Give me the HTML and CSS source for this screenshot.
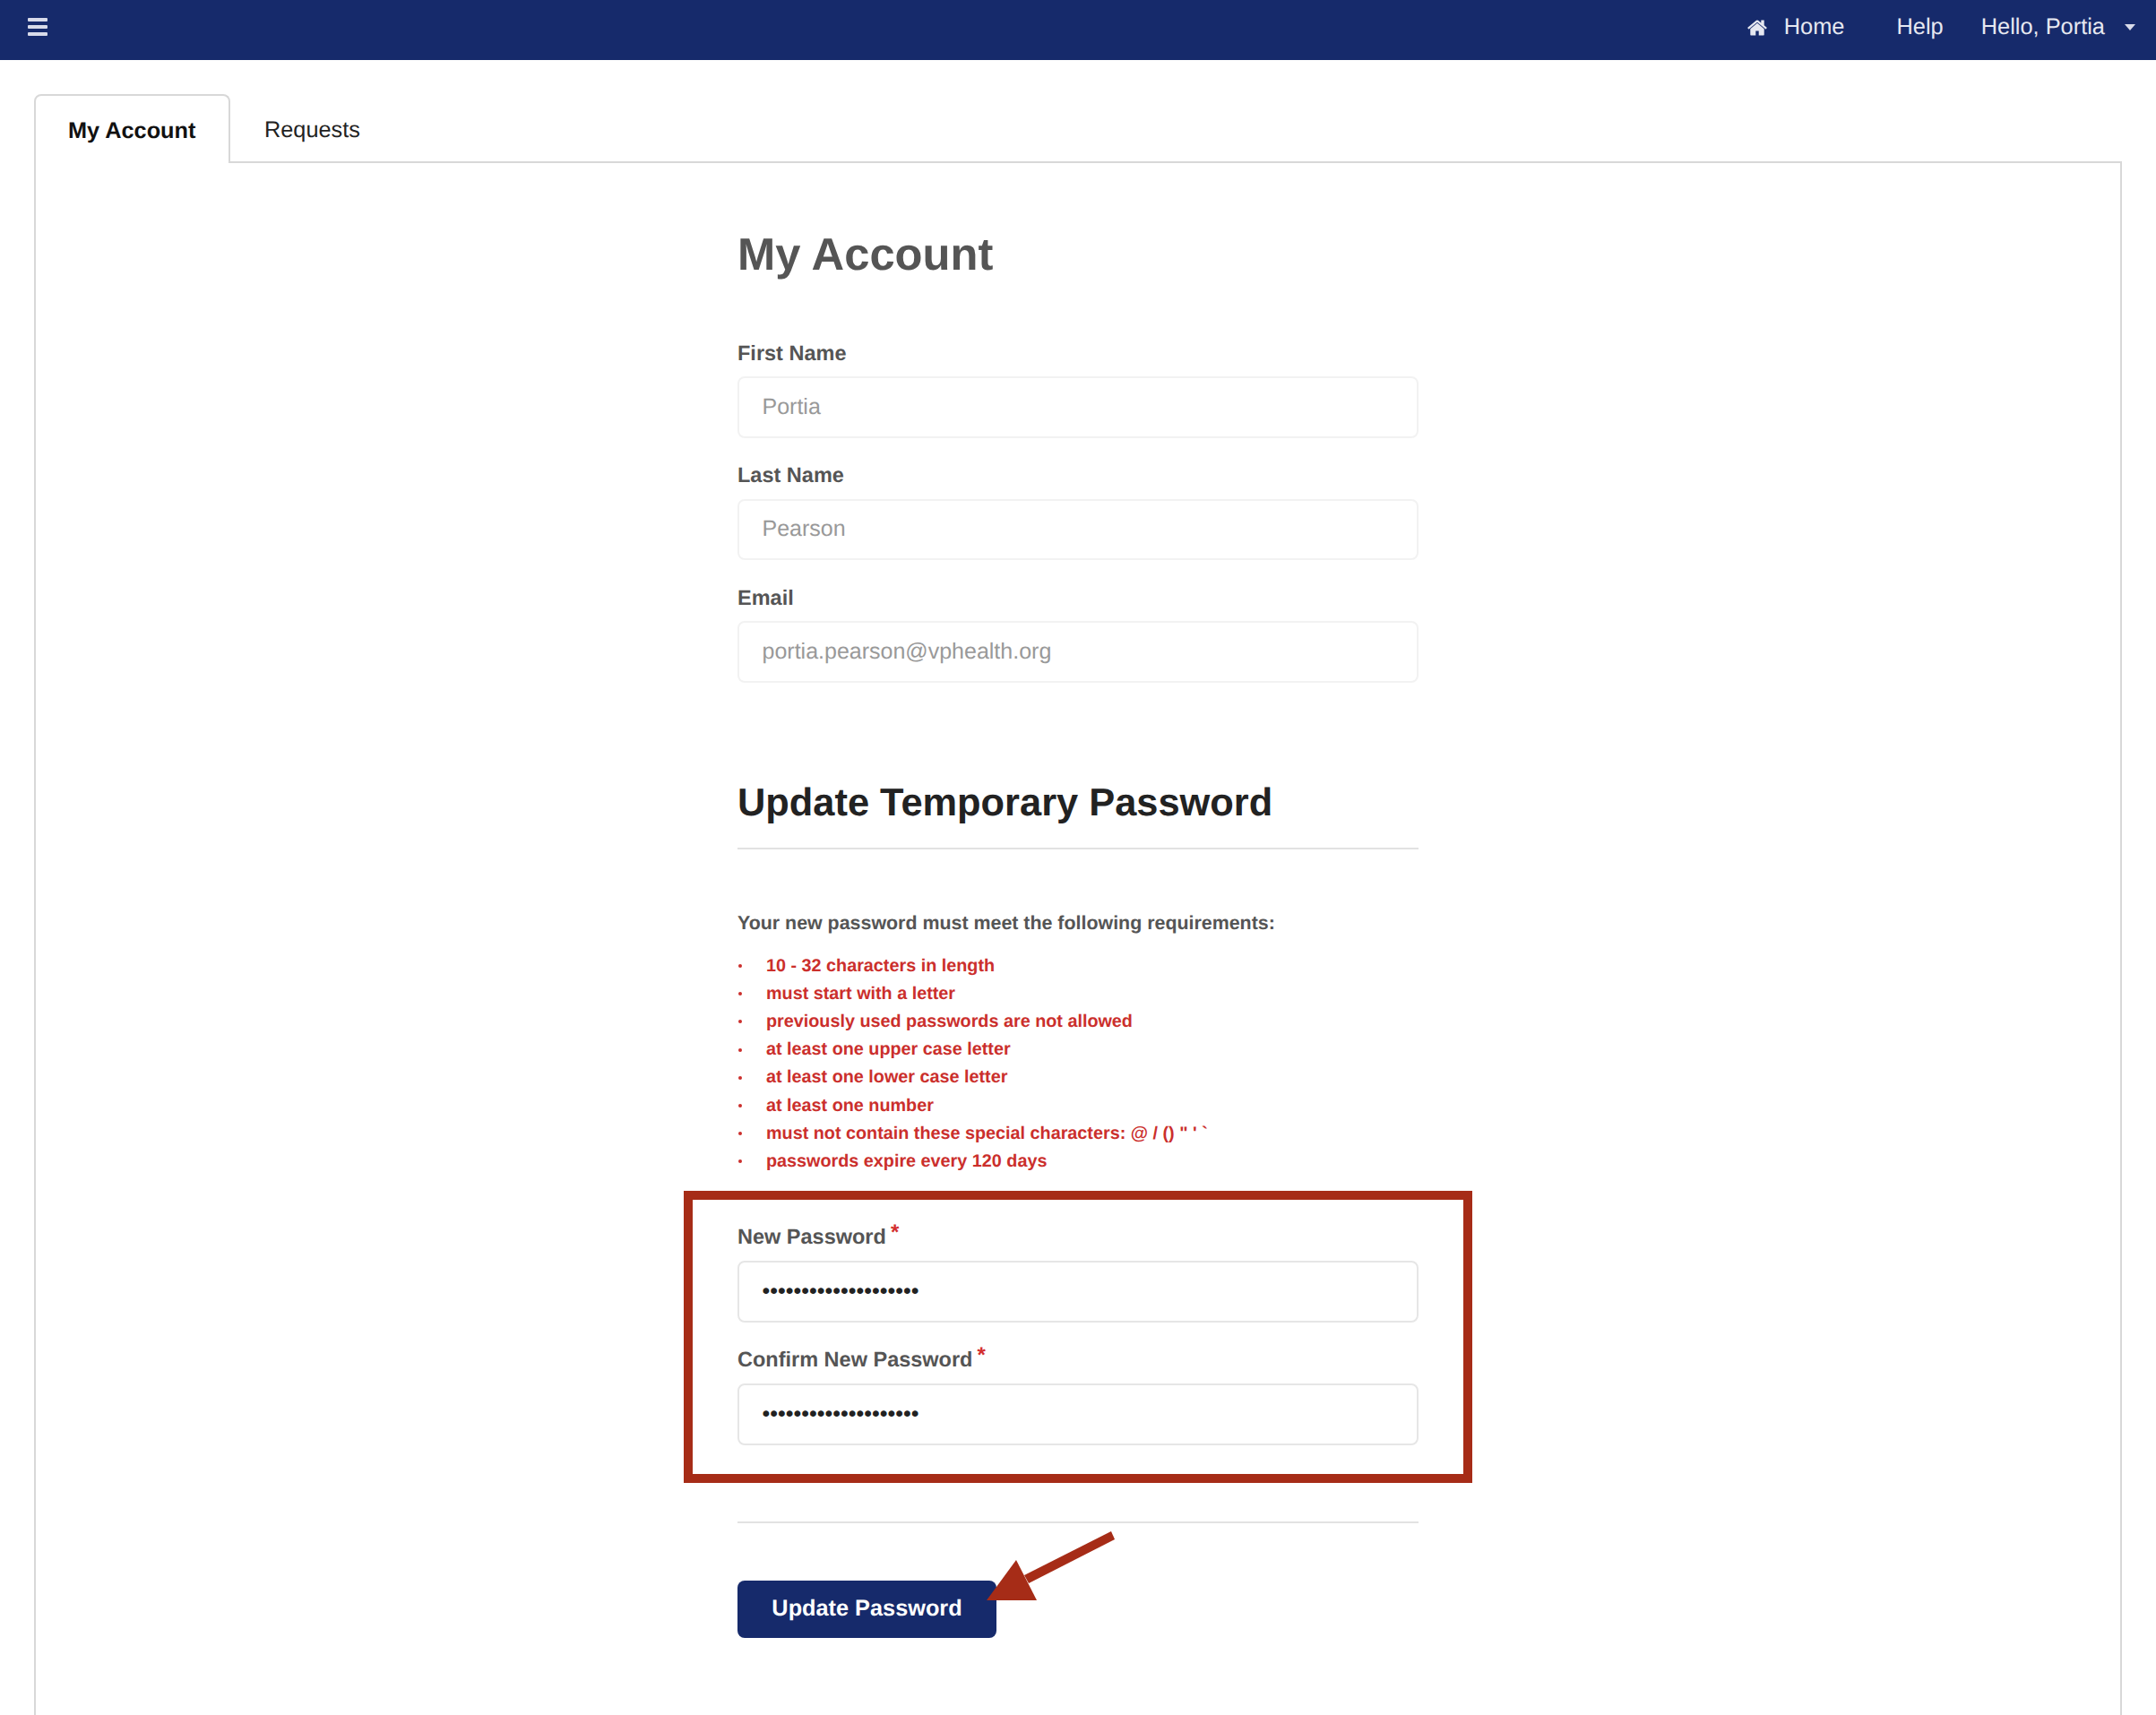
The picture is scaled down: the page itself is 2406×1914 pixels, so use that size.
FILE: index.html
```html
<!DOCTYPE html>
<html lang="en">
<head>
    <meta charset="UTF-8">
    <meta name="viewport" content="width=device-width, initial-scale=1.0">
    <title>My Account</title>
    <link rel="stylesheet" href="styles.css">
</head>
<body>
    <nav class="topbar">
        <div class="hamburger"><span></span><span></span><span></span></div>
        <div class="topbar-links">
            <a class="home-link">
                <svg class="home-icon" viewBox="0 0 1792 1792"><path fill="currentColor" d="M1472 992v480q0 26-19 45t-45 19h-384v-384h-256v384h-384q-26 0-45-19t-19-45v-480q0-1 .5-3t.5-3l575-474 575 474q1 2 1 6zm223-69l-62 74q-8 9-21 11h-3q-13 0-21-7l-692-577-692 577q-12 8-24 7-13-2-21-11l-62-74q-8-10-7-23.500t11-21.500l719-599q32-26 76-26t76 26l244 204v-195q0-14 9-23t23-9h192q14 0 23 9t9 23v408l219 182q10 8 11 21.500t-7 23.500z"/></svg>
                Home
            </a>
            <a class="help-link">Help</a>
            <a class="user-link">Hello, Portia<span class="caret"></span></a>
        </div>
    </nav>

    <main class="page">
        <div class="tabs">
            <a class="tab active">My Account</a>
            <a class="tab">Requests</a>
        </div>
        <section class="panel">
            <form class="account-form">
                <h1>My Account</h1>

                <div class="field">
                    <label>First Name</label>
                    <input type="text" value="Portia" readonly>
                </div>
                <div class="field">
                    <label>Last Name</label>
                    <input type="text" value="Pearson" readonly>
                </div>
                <div class="field">
                    <label>Email</label>
                    <input type="text" value="portia.pearson@vphealth.org" readonly>
                </div>

                <h2>Update Temporary Password</h2>

                <p class="req-title">Your new password must meet the following requirements:</p>
                <ul class="req-list">
                    <li>10 - 32 characters in length</li>
                    <li>must start with a letter</li>
                    <li>previously used passwords are not allowed</li>
                    <li>at least one upper case letter</li>
                    <li>at least one lower case letter</li>
                    <li>at least one number</li>
                    <li>must not contain these special characters: @ / () " ' `</li>
                    <li>passwords expire every 120 days</li>
                </ul>

                <div class="highlight-box">
                    <div class="field">
                        <label>New Password<sup>*</sup></label>
                        <input class="pw" type="password" value="12345678901234567890">
                    </div>
                    <div class="field">
                        <label>Confirm New Password<sup>*</sup></label>
                        <input class="pw" type="password" value="12345678901234567890">
                    </div>
                </div>

                <div class="actions">
                    <button type="button" class="btn-update">Update Password</button>
                    <svg class="arrow" viewBox="0 0 150 85"><polygon fill="#a62c17" points="3,77 36,32 59,77"/><polygon fill="#a62c17" points="45,49 142,0 146,9 50,58"/></svg>
                </div>
            </form>
        </section>
    </main>
</body>
</html>
```

FILE: styles.css
```css
* {
    box-sizing: border-box;
}
body {
    margin: 0;
    font-family: "Liberation Sans", Arial, sans-serif;
    background-color: #fff;
    color: #555;
    text-rendering: geometricPrecision;
}

/* top bar */
.topbar {
    display: flex;
    justify-content: space-between;
    align-items: center;
    height: 67px;
    padding: 0 23px 6px 31px;
    background-color: #162a6b;
    color: #e6e8f1;
    font-size: 25.4px;
}
.hamburger {
    display: flex;
    flex-direction: column;
    gap: 4px;
    width: 22px;
    margin-bottom: 1px;
}
.hamburger span {
    display: block;
    height: 4px;
    border-radius: 1px;
    background-color: #d8dbea;
}
.topbar-links {
    display: flex;
    align-items: center;
}
.home-link {
    display: flex;
    align-items: center;
    gap: 18px;
    margin-right: 58px;
}
.home-icon {
    width: 24px;
    height: 24px;
}
.help-link {
    margin-right: 42px;
}
.user-link {
    display: flex;
    align-items: center;
}
.caret {
    margin-left: 22px;
    border-top: 7px solid #d8dbea;
    border-left: 6.5px solid transparent;
    border-right: 6.5px solid transparent;
}

/* tabs */
.page {
    padding: 38px 38px 0 38px;
}
.tabs {
    display: flex;
}
.tab {
    padding: 25px 38px 0;
    height: 77px;
    font-size: 25.3px;
    line-height: 30px;
    color: #222;
    white-space: nowrap;
    border-bottom: 2px solid #d8d8d8;
}
.tab.active {
    width: 219px;
    color: #111;
    font-weight: bold;
    background-color: #fff;
    border: 2px solid #d8d8d8;
    border-bottom: none;
    border-radius: 8px 8px 0 0;
    padding: 24px 36px 0;
}
.tab:last-child {
    flex: 1;
}
.panel {
    border-left: 2px solid #d8d8d8;
    border-right: 2px solid #d8d8d8;
    padding: 72px 0 86px;
}

/* form */
.account-form {
    width: 760px;
    margin: 0 auto;
}
h1 {
    margin: 0 0 64.5px;
    font-size: 50.7px;
    line-height: 60px;
    color: #555;
}
h2 {
    margin: 109.5px 0 66.5px;
    padding-bottom: 25px;
    font-size: 43.4px;
    line-height: 50px;
    color: #222;
    border-bottom: 2px solid #e2e2e2;
}
.field {
    margin-bottom: 26.5px;
}
.field:last-of-type {
    margin-bottom: 0;
}
label {
    display: block;
    margin-bottom: 11.5px;
    font-size: 23.5px;
    line-height: 30px;
    font-weight: bold;
    color: #555;
}
label sup {
    margin-left: 5px;
    font-size: 24px;
    line-height: 0;
    vertical-align: 5px;
    color: #d32f2f;
}
input {
    display: block;
    width: 100%;
    height: 68.5px;
    padding: 0 25.5px;
    border: 2px solid #f2f2f2;
    border-radius: 8px;
    font-family: inherit;
    font-size: 25px;
    color: #999;
    background-color: #fff;
    outline: none;
    text-rendering: geometricPrecision;
}
input.pw {
    height: 69px;
    border-color: #e6e6e6;
    color: #222;
}
.req-title {
    margin: 0 0 18px;
    font-size: 21.4px;
    line-height: 30px;
    font-weight: bold;
}
.req-list {
    margin: 0 0 16.8px;
    padding: 0;
    list-style: none;
}
.req-list li {
    display: flex;
    align-items: center;
    height: 31.2px;
    font-size: 19.8px;
    font-weight: bold;
    color: #cb2f2c;
}
.req-list li::before {
    content: "";
    width: 4px;
    height: 4px;
    margin: 0 27px 0 1px;
    border-radius: 50%;
    background-color: #cb2f2c;
}
.highlight-box {
    margin: 0 -60px;
    padding: 26.5px 50px 32px;
    border: 10px solid #a62c17;
}
.actions {
    position: relative;
    margin-top: 43px;
    padding-top: 64px;
    border-top: 2px solid #e2e2e2;
}
.btn-update {
    display: block;
    width: 289px;
    height: 64px;
    border: none;
    border-radius: 8px;
    background-color: #162a6b;
    color: #fff;
    font-family: inherit;
    font-size: 25.3px;
    font-weight: bold;
    text-rendering: geometricPrecision;
}
.arrow {
    position: absolute;
    left: 275px;
    top: 9px;
    width: 150px;
    height: 85px;
}
```
